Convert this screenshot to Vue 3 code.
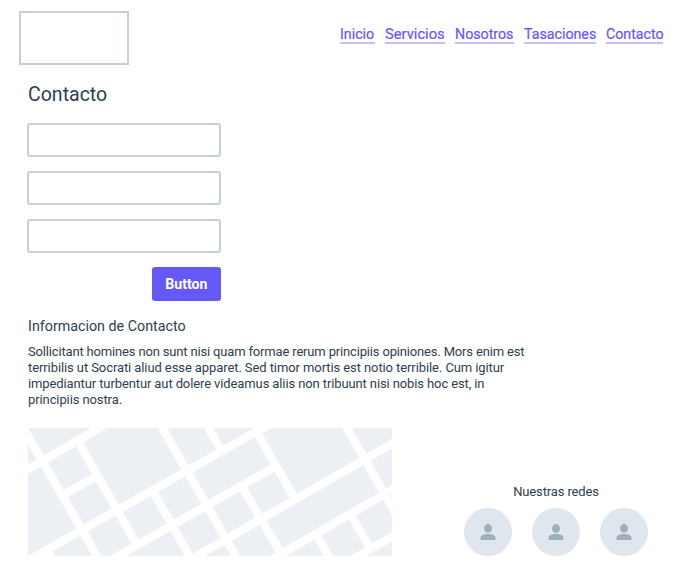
<script setup>
const links = [
  { label: 'Inicio', cls: 'inicio' },
  { label: 'Servicios', cls: 'servicios' },
  { label: 'Nosotros', cls: 'nosotros' },
  { label: 'Tasaciones', cls: 'tasaciones' },
  { label: 'Contacto', cls: 'contacto' },
]
const lines = [
  'Sollicitant homines non sunt nisi quam formae rerum principiis opiniones. Mors enim est',
  'terribilis ut Socrati aliud esse apparet. Sed timor mortis est notio terribile. Cum igitur',
  'impediantur turbentur aut dolere videamus aliis non tribuunt nisi nobis hoc est, in',
  'principiis nostra.',
]
// Street centre lines: x1 y1 x2 y2
const roads = [
  [-10, 47, 85, -8], [-6.2, 136, 242, -4], [76, 136, 245.3, 39.7], [155, 136, 374, 10],
  [240, 133.5, 374, 56], [320, 134, 374, 103], [37.3, 65.7, 65.7, 50],
  [-9.2, -8, 73.6, 136], [50.7, 14.7, 108.5, 116], [129.7, -8, 212.3, 136],
  [124.7, 63, 166, 136], [175.8, -8, 193, 22], [228, 3, 266, 69],
  [212.5, 56.5, 254, 127], [314.4, -8, 369, 88], [287.5, 105.5, 305, 136],
  [322.7, 86.5, 342.5, 121], [18, 120, 27.3, 136],
]
</script>

<template>
  <main class="page">
    <header class="top">
      <div class="logo"></div>
      <nav class="nav">
        <a v-for="l in links" :key="l.label" :class="l.cls"><span>{{ l.label }}</span></a>
      </nav>
    </header>
    <h1><span>Contacto</span></h1>
    <form class="form" @submit.prevent>
      <input v-for="n in 3" :key="n" type="text" />
      <button type="button"><span>Button</span></button>
    </form>
    <h2><span>Informacion de Contacto</span></h2>
    <p class="copy">
      <span v-for="(t, i) in lines" :key="i" :class="'l' + i">{{ t }}</span>
    </p>
    <footer class="bottom">
      <svg class="map" width="364" height="128" viewBox="0 0 364 128">
        <rect width="364" height="128" fill="#eceff4" />
        <path v-for="(r, i) in roads" :key="i" :d="`M${r[0]} ${r[1]}L${r[2]} ${r[3]}`" stroke="#fff" stroke-width="8.2" />
      </svg>
      <section class="social">
        <h3>Nuestras redes</h3>
        <div class="avatars">
          <div v-for="n in 3" :key="n" class="avatar">
            <svg width="16" height="16" viewBox="0 0 16 16" fill="#9fafbc">
              <ellipse cx="8" cy="4.5" rx="4" ry="4.4" />
              <path d="M.6 16v-2.2C.6 11.4 3.4 10.1 8 10.1s7.4 1.3 7.4 3.7V16z" />
            </svg>
          </div>
        </div>
      </section>
    </footer>
  </main>
</template>

<style>
body { background: #fff; }
</style>
<style scoped>
.page { box-sizing: border-box; width: 680px; height: 568px; padding: 11px 0 0 27px; overflow: hidden; font-family: Roboto, sans-serif; color: #2f404f; }
.top { display: flex; justify-content: space-between; margin-left: -8px; padding-right: 17px; }
.logo { box-sizing: border-box; width: 110px; height: 54px; border: 2px solid #c3cfda; }
.nav { display: flex; gap: 10px; padding-top: 14px; }
.nav a { box-sizing: border-box; height: 19px; border-bottom: 2px solid #c8c0fc; color: #6558f5; font-size: 15.5px; line-height: 18px; white-space: nowrap; }
.nav span, h1 span, h2 span, button span { display: inline-block; transform-origin: 0 50%; }
.nav span { transform: scaleX(.917); -webkit-text-stroke: .2px #6558f5; }
.inicio { width: 35px; }
.servicios { width: 60px; }
.servicios span { transform: scaleX(.95); }
.nosotros { width: 59px; }
.tasaciones { width: 72px; }
.contacto { width: 57px; }
h1, h2, h3 { margin: 0; font-weight: 400; white-space: nowrap; }
h1 { padding: 16px 0 0 1px; font-size: 21px; line-height: 26px; }
h1 span { transform: scaleX(.93); }
.form { display: flex; flex-direction: column; gap: 14px; width: 194px; margin-top: 16px; }
input { box-sizing: border-box; width: 194px; height: 34px; padding: 0 8px; border: 2px solid #c3cfda; border-radius: 3px; outline: none; background: #fff; }
button { align-self: flex-end; width: 69px; height: 34px; padding: 0; border: 0; border-radius: 3px; background: #6558f5; color: #fff; font: 700 15px/34px Roboto, sans-serif; }
button span { transform: scaleX(.94); transform-origin: 50% 50%; }
h2 { margin: 15px 0 0 1px; font-size: 15px; line-height: 20px; }
h2 span { transform: scaleX(.952); }
.copy { display: flex; flex-direction: column; margin: 8px 0 0 1px; font-size: 13px; line-height: 16px; white-space: nowrap; }
.l0 { letter-spacing: -.165px; }
.l1 { letter-spacing: -.09px; }
.l2 { letter-spacing: -.11px; }
.l3 { letter-spacing: -.1px; }
.bottom { display: flex; margin: 20px 0 0 1px; }
.map { display: block; }
.social { width: 184px; margin-left: 72px; padding-top: 56px; }
h3 { font-size: 13px; line-height: 16px; letter-spacing: -.14px; text-align: center; }
.avatars { display: flex; gap: 20px; margin-top: 8px; }
.avatar { display: flex; align-items: center; justify-content: center; width: 48px; height: 48px; border-radius: 50%; background: #dfe6ee; }
</style>
